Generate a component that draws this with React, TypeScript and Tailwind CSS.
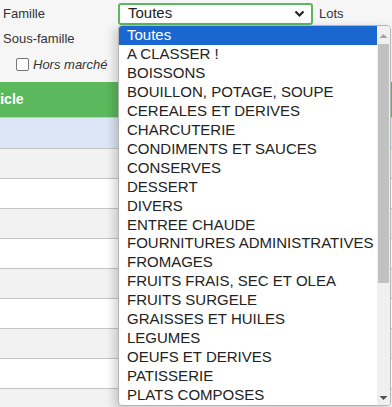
import React from "react";

const items = [
  "Toutes",
  "A CLASSER !",
  "BOISSONS",
  "BOUILLON, POTAGE, SOUPE",
  "CEREALES ET DERIVES",
  "CHARCUTERIE",
  "CONDIMENTS ET SAUCES",
  "CONSERVES",
  "DESSERT",
  "DIVERS",
  "ENTREE CHAUDE",
  "FOURNITURES ADMINISTRATIVES",
  "FROMAGES",
  "FRUITS FRAIS, SEC ET OLEA",
  "FRUITS SURGELE",
  "GRAISSES ET HUILES",
  "LEGUMES",
  "OEUFS ET DERIVES",
  "PATISSERIE",
  "PLATS COMPOSES",
];

const rows = [0, 1, 2, 3, 4, 5, 6, 7, 8, 9];

export default function App() {
  return (
    <div
      className="relative w-[392px] h-[407px] overflow-hidden bg-[#f6f6f6] text-[#333]"
      style={{ fontFamily: '"Liberation Sans", Arial, sans-serif' }}
    >
      {/* form area */}
      <div className="h-[82px] flex flex-col">
        <div className="flex items-center h-[26px] pt-[1px]">
          <div className="w-[118px] pl-[3px] text-[13px]">Famille</div>
          <div className="w-[195px] h-[22px] border-2 border-[#5cb85c] rounded-[3px] bg-white flex items-center justify-between pl-[8px] pr-[6px] text-[15px] text-[#222]">
            <span>Toutes</span>
            <svg width="11" height="8" viewBox="0 0 11 8">
              <path d="M1.5 1.5 L5.5 5.5 L9.5 1.5" stroke="#222" strokeWidth="2.2" fill="none" />
            </svg>
          </div>
          <div className="ml-[6px] text-[13px]">Lots</div>
        </div>
        <div className="flex items-center h-[26px]">
          <div className="pl-[3px] text-[13px]">Sous-famille</div>
        </div>
        <div className="flex items-center h-[25px] pl-[16px]">
          <div className="w-[13px] h-[13px] border border-[#767676] rounded-[2px] bg-white" />
          <span className="ml-[4px] text-[13px] italic">Hors marché</span>
        </div>
      </div>

      {/* table */}
      <div className="w-[392px]">
        <div className="h-[36px] bg-[#5cb85c] border-b border-[#c8c8c8] flex items-center overflow-hidden">
          <span className="-ml-[20px] text-white font-bold text-[14px]">Article</span>
        </div>
        <div className="h-[31px] bg-[#dde6f6] border-b border-[#c4c4c4]" />
        {rows.map((r) => (
          <div
            key={r}
            className={
              r % 2 === 0
                ? "h-[30px] bg-[#f2f2f2] border-b border-[#c4c4c4]"
                : "h-[30px] bg-white border-b border-[#c4c4c4]"
            }
          />
        ))}
      </div>

      {/* dropdown popup */}
      <div className="absolute left-[118px] top-[25px] w-[273px] h-[381px] bg-white border border-[#b5b5b5] rounded-[4px] shadow-[-4px_3px_10px_rgba(0,0,0,0.18)] overflow-hidden flex">
        <div className="flex-1 flex flex-col text-[15px] text-[#222]">
          {items.map((it, i) => (
            <div
              key={it}
              className={
                i === 0
                  ? "h-[19px] leading-[17px] pl-[8px] bg-[#1a67d2] text-white whitespace-nowrap"
                  : "h-[19px] leading-[17px] pl-[8px] whitespace-nowrap"
              }
            >
              {it}
            </div>
          ))}
        </div>
        <div className="w-[13px] bg-[#f0f0f0] relative">
          <svg className="absolute left-[2px] top-[7px]" width="9" height="6" viewBox="0 0 9 6">
            <path d="M0.5 5 L4.5 1 L8.5 5 Z" fill="#a3a3a3" />
          </svg>
          <div className="absolute left-[1px] right-[1px] top-[18px] h-[239px] bg-[#c1c1c1]" />
          <svg className="absolute left-[2px] top-[369px]" width="9" height="6" viewBox="0 0 9 6">
            <path d="M0.5 1 L4.5 5 L8.5 1 Z" fill="#505050" />
          </svg>
        </div>
      </div>
    </div>
  );
}
